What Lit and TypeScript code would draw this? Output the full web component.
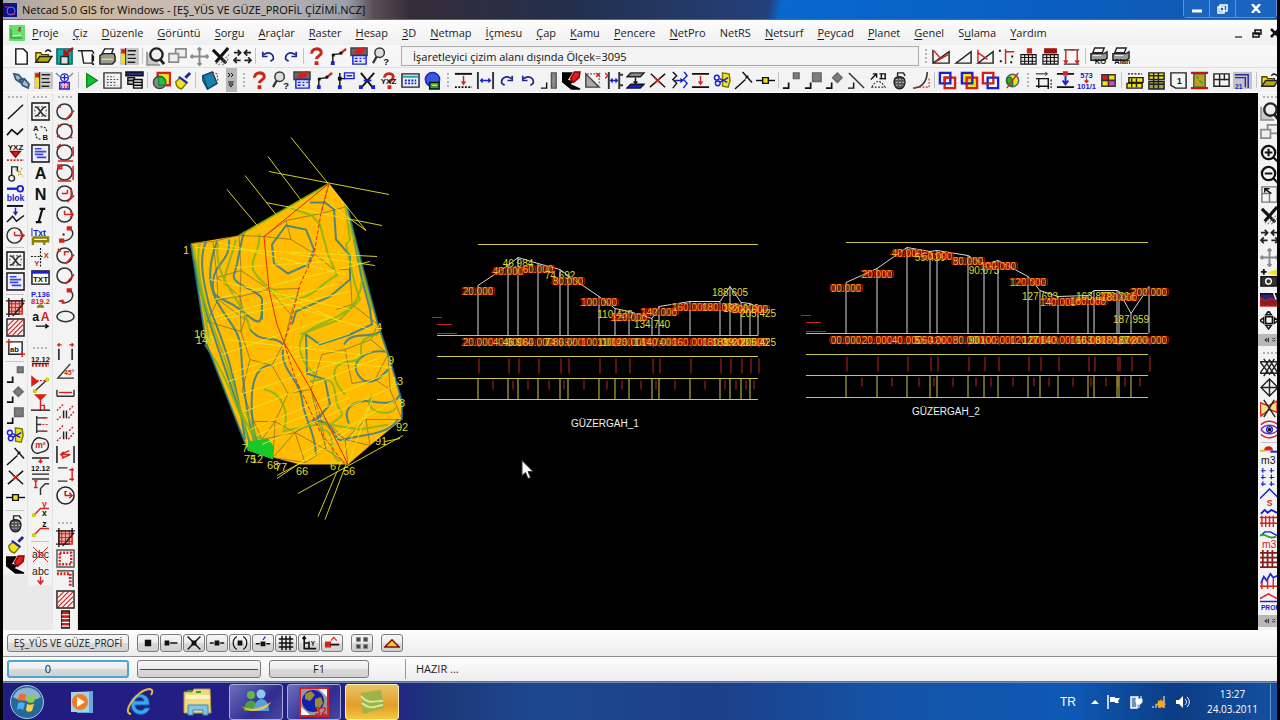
import { LitElement, html, svg, css, nothing } from "lit";
import { customElement, property } from "lit/decorators.js";

/* ---------- drawing helpers ---------- */
const P = (d: string, stroke = "#111", fill = "none", w = 1.5) =>
  svg`<path d=${d} stroke=${stroke} fill=${fill} stroke-width=${w}></path>`;
const D = (d: string, stroke = "#111", w = 1.2) =>
  svg`<path d=${d} stroke=${stroke} fill="none" stroke-width=${w} stroke-dasharray="2 1.5"></path>`;
const T = (t: string, x: number, y: number, size: number, color = "#111") =>
  svg`<text x=${x} y=${y} font-size=${size} fill=${color} text-anchor="middle" font-weight="700">${t}</text>`;
const C = (x: number, y: number, r: number, stroke = "#111", fill = "none", w = 1.5) =>
  svg`<circle cx=${x} cy=${y} r=${r} stroke=${stroke} fill=${fill} stroke-width=${w}></circle>`;

const RED = "#d8201c";
const BLUE = "#1a22d0";
const YEL = "#f2e21a";
const GRAY = "#8a8a8a";

const hatch = P("M2 8l6-6M2 13l11-11M2 18l16-16M7 18l11-11M12 18l6-6", RED, "none", 1.2);
const crossedBox = [P("M1 1h18v18h-18z", "#111", "#f4f4f4"), P("M4 5l3 1 6 8 3 1M16 5l-3 1-6 8-3 1", "#333", "none", 1.8), D("M7 5h6M7 15h6M4 8v4M16 8v4", "#555")];
const textBox = [P("M1 1h18v18h-18z", "#111", "#eef"), P("M4 5h7M4 8h12M4 11h9M6 14h10", "#3848d8", "none", 1.8)];
const help = [P("M5 7c-1-6 10-7 10-1 0 4-5 3-5 7", "#c8281c", "none", 3.2), P("M8 15h4v4h-4z", "#c8281c", "#c8281c", 0)];
const nodeLine = [P("M4 17v-9l9-1", "#111"), P("M12 7l6-5", RED, "none", 2.5), P("M2 15h4v4h-4z", BLUE, BLUE, 0), P("M3 7h3v3h-3zM11 5h3v3h-3z", "#111", "#111", 0)];
const calcBox = [P("M1 1h17v8h-17z", "#444", "#666"), P("M5 6l4-4 6-1-2 5-4 1z", RED, RED), P("M3 9h14v9h-14z", BLUE, "#dfe6ff"), P("M5 12h3M10 12h2M14 12h2M5 15h3M10 15h2", BLUE)];
const lensQ = [C(8, 6, 5, "#333", "#ddd"), P("M5 10l-4 7", "#333", "none", 2.5), T("?", 15, 19, 10)];
const undo = P("M5 8c5-4 11-1 10 5l-3 2M4 5v5h5", "#20288c", "none", 1.8);
const redo = P("M15 8c-5-4-11-1-10 5l3 2M16 5v5h-5", "#20288c", "none", 1.8);
const list = [P("M1 2h18v16h-18z", "#bbb", "#cfcfcf"), P("M8 4h9M8 8h8M8 12h9M8 16h8", "#222"), P("M2 3h3v3h-3z", RED, RED), P("M2 8h3v3h-3zM2 13h3v3h-3z", YEL, YEL), P("M6 1v18", "#111", "none", 1)];
const grayBox = (s: number) => [P(`M${18 - s} 2h${s}v${s}h-${s}z`, "#666", "#7c7c7c"), P("M7 12v6h-6", "#111", "none", 1.8)];
const diamond = [P("M13 2l5 5-5 5-5-5z", "#666", "#7c7c7c"), P("M7 12v6h-6", "#111", "none", 1.8)];
const scissors = [P("M10 2l7 1 1 7-2 7-6-1z", "#777700", YEL), C(4, 7, 2.5, BLUE), C(5, 13, 2.5, BLUE), P("M7 8l8 4M7 12l9-5", BLUE)];
const trim = [P("M1 19l11-10M9 1l10 11", "#111"), P("M12 8l3-3", "#111")];
const cross = [P("M2 17L18 3M3 3l15 14", "#111"), P("M7 7l6 6M13 7l-6 6", RED)];
const midNode = [P("M0 10h20", "#111"), P("M7 7h6v6h-6z", "#111", YEL)];
const grenade = [P("M10 6c5 0 7 4 5 9-2 5-8 5-10 0-2-5 0-9 5-9z", "#222", "#555"), P("M8 6V2h6l2 3", "#222"), D("M6 9h8M6 12h9M6 15h8", "#bbb")];
const broom = [P("M18 2l-5 5", "#20288c", "none", 3), P("M3 11l5-4 7 5-6 7c-4-1-6-4-6-8z", "#777700", YEL), P("M6 6l9 7", BLUE, "none", 2)];
const pencil = [P("M0 2h10l-5 8 6 1-3 3 11 5-9 0-10-8z", "#000", "#000"), P("M9 8l4-7h6l-1 6-6 5z", "#900", RED)];
const zoomWin = [P("M1 5v14h14", GRAY, "#c8c8c8"), C(11, 8, 6.5, "#222", "#eee", 2.5), P("M15 13l4 5", "#222", "none", 3)];
const copies = [P("M8 2h11v9h-11z", GRAY, "#eee", 1.8), P("M1 7h10v9h-10z", GRAY, "#eee", 1.8)];
const move = P("M10 1v18M1 10h18M8 3l2-2 2 2M8 17l2 2 2-2M3 8l-2 2 2 2M17 8l2 2-2 2", GRAY, "none", 2);
const wipe = [P("M2 3l14 14M18 1l-13 15", "#111", "none", 3.2), D("M8 19l11-11M12 19l7-7M5 18l4-4", "#777")];
const swap = [P("M1 6h6M5 3l3 3-3 3M12 6h7M15 3l-3 3 3 3", "#222", "none", 1.8), P("M1 14h7M4 11l-3 3 3 3M12 14h7M16 11l3 3-3 3", "#222", "none", 1.8)];
const hatchGrid = [P("M3 3h14v14h-14z", RED, "#f6b0a8"), P("M3 6h14M3 10h14M3 14h14M6 3v14M10 3v14M14 3v14", RED, "none", 1.2), P("M0 3h20M3 0v20M19 5L7 19M0 17h14M17 0v8", "#222", "none", 1.5)];
const squares = (a: string, b: string, f: string) => [P("M7 7h11v11h-11z", b, f, 2.5), P("M2 2h11v11h-11z", a, f, 2.5), P("M7 13v-6h6", b, "none", 2.5)];
const spacing = [P("M1 3h18", "#111", "none", 2), D("M1 17h18", "#111", 2), P("M10 5v9M8 11l2 3 2-3", RED)];
const gapH = [P("M2 1v18M18 1v18", "#333", "none", 2), P("M5 10h10M7 8l-2 2 2 2M13 8l2 2-2 2", BLUE)];
const table = [P("M2 8h16v10h-16zM2 11h16M2 15h16M6 8v10M10 8v10M14 8v10", "#111", "#eee", 1.2)];
const circleTan = (extra: string) => [C(9, 10, 8, "#333", "none", 1.6), P(extra, RED, "none", 1.6)];
const printer = (t: string) => [P("M6 1h10l-2 5h-10z", "#222", "#fff"), P("M2 7h14l3-2v7l-3 2h-14z", "#222", "#999"), P("M4 9h9", "#eee", "none", 1), T(t, 12, 18, 8)];
const vArrow = [P("M1 3h18M1 17h18", "#111", "none", 2), P("M10 5v9M7 10l3 4 3-4", BLUE, "none", 2), P("M8 1h4v3h-4z", RED, RED)];

const ICONS: Record<string, unknown> = {
  new: P("M4 2h8l4 4v12h-12z", "#111", "#fff"),
  open: [P("M2 16V6h5l1 2h7v3", "#554400", YEL), P("M2 16l4-6h13l-4 6z", "#222", "#b5a818"), P("M12 5c2-3 4-2 6 0", "#111")],
  save: [P("M2 2h16v16h-16z", "#066", "#16a8a8"), P("M6 10h8v8h-8z", "#033", "#ddd"), P("M19 1l-8 6M10 3v5h5", "#b01010", "none", 2.5)],
  plot: [P("M1 4h15l2 3M5 4l2 13h9V7", "#222", "#fff"), P("M17 9v6M17 17v2", "#111", "none", 2)],
  print: [P("M7 2h9l-2 6h-10z", "#222", "#fff"), P("M2 9l3-2h12l1 3v5l-3 3h-13z", "#222", "#999"), P("M4 13h12", YEL)],
  list, zoomWin, copies, move, wipe, swap, undo, redo, help, nodeLine, calcBox, lensQ,
  tri1: [P("M1 3v14h17V5L1 17", "#222"), P("M2 4l7 8M3 16l14-8", RED)],
  tri2: P("M2 17h16V5z", "#222"),
  tri3: [P("M2 17h16V5z", "#222"), P("M2 3v13M2 6l10 7", RED)],
  points: [P("M9 2v16M9 5h9", RED), P("M2 3h2v2h-2zM15 9h2v2h-2zM3 14h2v2h-2zM14 15h2v2h-2z", "#111", "#111", 0)],
  tab1: [table, P("M9 2h4v4h-4z", RED, RED)],
  tab2: [table, P("M4 2h12v4h-12z", "#9c1010", "#9c1010")],
  frame: [P("M2 3h16M2 18h16", "#333"), P("M4 3v13M16 3v13M2 14l2 3 2-3M14 14l2 3 2-3M8 3h5", RED)],
  printKo: printer("KO"), printAlan: printer("Alan"),
  link: [P("M2 3l5 1 5 6-2 3-6-4zM8 9l5-1 5 6-1 4-6-3z", "#335577", "#a8bccc", 1.8)],
  person: [C(10, 7, 4, BLUE, "#fff"), P("M10 4v6M7 7h6", BLUE), P("M5 12h10v7h-10z", BLUE, "#f0c0e8"), D("M7 12v7M10 12v7M13 12v7", RED), P("M1 2l4 4M19 2l-4 4", GRAY)],
  play: P("M5 3v14l11-7z", "#0a8a20", "#12c030"),
  sheet: [P("M1 2h18v16h-18z", "#333", "#f2f2f2"), D("M4 6h8M4 9h12M4 12h9M4 15h11", "#555")],
  windows: [P("M1 1h18v4h-18z", "#111", "#222a88"), P("M3 7h7v7h-7zM3 10h7", "#111", "#bbb"), P("M9 9h9v9h-9zM9 12h9M9 15h9", "#111", "#ddd")],
  shapes: [P("M6 2h13v13h-13z", RED, YEL, 2.5), C(8, 12, 6.5, "#444", "#888"), P("M7 6c6 0 8 4 7 9H7z", "#1a8a2a", "#22c040")],
  broom,
  book: [P("M3 5l10-4 5 12-10 6z", "#0b4668", "#1a80b0"), P("M3 5v5l5 9", "#0b4668"), D("M13 1l5 2 1 8", RED)],
  flag: [P("M4 17v-15M4 8h6", "#111"), P("M2 15h4v4h-4z", BLUE, BLUE, 0), P("M2 6h4v4h-4z", "#111", "#111", 0), P("M9 2h10v6h-10z", BLUE, "#eef"), P("M11 5h6", BLUE)],
  knot: [P("M3 2l13 16M17 2L3 18", "#111", "none", 2), P("M6 10h8", BLUE, "none", 2), P("M14 15h4v4h-4zM1 15h4v4h-4z", BLUE, BLUE, 0)],
  yxz: [P("M6 7c-1-5 9-6 9-1 0 4-4 3-4 7", "#c8281c", "none", 3), P("M9 15h4v4h-4z", "#c8281c", "#c8281c", 0), T("YXZ", 10, 14, 8.5)],
  keypad: [P("M1 3h18v14h-18z", "#222", "#e8eef8"), P("M2 6h16", "#20a0a0", "none", 2), D("M4 10h12M4 13h12", BLUE, 2)],
  globeCalc: [C(10, 9, 7.5, BLUE, "#3858e0"), P("M7 12h10v7h-10z", "#111", "#22a040"), P("M9 15h6", YEL)],
  spacing, gapH,
  col: [P("M12 2h5v16h-5z", "#555", GRAY), P("M7 12v6h-6", "#111")],
  pencil,
  gtri: [P("M3 3v14h14z", "#444", "#aaa"), D("M4 3h13v12", "#555"), P("M14 2l4 4M18 2l-4 4", RED)],
  gapRed: [P("M4 1v18M15 1v18M15 4h4M15 15h4", "#333", "none", 2), P("M6 10h7M8 8l-2 2 2 2M11 8l2 2-2 2", BLUE), P("M0 2l3 3-3 3", RED)],
  layers: [P("M5 2h14l-4 4h-14z", "#222", GRAY), P("M5 14h14l-4 4h-14z", "#113", BLUE), P("M10 7v6M8 11l2 2 2-2", "#111")],
  cross,
  zig: [P("M3 1l4 4-4 4 4 4-4 5", "#111"), P("M15 1l3 4-4 4 4 4-4 5M5 10h8M11 8l2 2-2 2", BLUE)],
  spacing2: [P("M1 3h18M1 17h18", "#111", "none", 2), P("M10 5v9M8 11l2 3 2-3", RED)],
  scissors, trim, midNode,
  box6: grayBox(6), box8: grayBox(9), diamond,
  lineBox: [P("M2 2l16 16", "#333"), P("M7 12v6h-6", "#111")],
  arrowEm: [P("M2 9l6-6M4 3h4v4M11 3h7M11 8h7M13 3v6M17 3v6", "#111"), D("M3 17c4-8 9-8 14 0z", "#333")],
  grenade,
  curve: [P("M1 18c8 0 15-6 15-17", "#222"), D("M4 17h14v-10", RED)],
  sqA: squares(BLUE, "#d82010", "none"), sqB: squares(BLUE, "#d82010", YEL), sqC: squares("#d82010", BLUE, "#fff"),
  globe: [C(10, 10, 6.5, "#557", YEL), P("M4 8c4-4 7 0 6 8-4 0-7-4-6-8z", "#187830", "#22b040"), P("M4 18L16 2", RED)],
  dim: [P("M2 8h13v11M5 8v10M2 16h14", "#111"), P("M2 3h12M12 1l2 2-2 2", "#111", "none", 1), D("M18 9v9", "#111")],
  vArrow,
  n573: [T("573", 10, 7, 8, BLUE), P("M10 8v4M8 10l2 2 2-2", RED), T("101/1", 10, 19, 8, BLUE)],
  quad: [P("M3 4h7v6h-7z", "#333", RED), P("M10 4h7v6h-7z", "#333", YEL), P("M3 10h7v6h-7z", "#333", YEL), P("M10 10h7v6h-7z", "#333", "#e040d0")],
  db1: [P("M3 7h15v5h-15zM1 13h16v5h-16z", "#222", YEL), D("M2 3h15", "#111"), P("M6 8v9M11 8v9", "#222")],
  db2: [P("M2 2h16v7h-16z", "#222", YEL), P("M2 11h16v8h-16z", "#222", "#a8a040"), P("M7 2v17M12 2v17M2 5h16M2 14h16", "#222")],
  page1: [P("M2 2h16v16h-11l-5-3z", "#222", "#f4f4f4"), T("1", 11, 14, 9)],
  scroll: [P("M4 3h12v14h-12z", "#553", "#b8a020"), P("M1 2h18M1 18h18", "#c01818", "none", 2.5), P("M7 6l2 2M10 10l3 3", "#22a040")],
  panes: P("M2 3h16v13h-16zM2 9h16M8 3v13M13 3v7", "#222", "#f4f4f4"),
  pipe: [P("M0 1h20v18h-20z", "#bbb", "#c4c4c8", 0), P("M2 4h14v14M2 7h11v10", "#2030a0"), T("21", 6, 19, 7, BLUE)],

  line: P("M2 18L18 3", "#111"),
  poly: P("M1 14l5-6 6 5 6-6", "#111", "none", 1.8),
  yxzDown: [T("YXZ", 10, 7, 8.5), P("M5 9h10l-5 6z", "#900", RED), D("M1 18h18", RED, 2)],
  tap: [C(6, 15, 3, "#333"), P("M6 12V3h6v5", "#222"), D("M10 5l8 8M17 4l-4 8", "#b8a800")],
  blok: [C(15, 5, 3, BLUE, "none", 2), P("M1 5h11", BLUE, "none", 2.5), T("blok", 10, 18, 9, BLUE)],
  arrPoly: [P("M1 1h17", "#111", "none", 2), P("M10 3v6M8 7l2 3 2-3", BLUE), P("M1 18l6-6 4 5 8-6", "#111")],
  circR: [C(9, 10, 8, "#333"), P("M9 10h10M15 7l4 3-4 3M9 6v4", RED)],
  crossedBox, textBox, hatchGrid,
  hatchBox: [hatch, P("M1 1h18v18h-18z", "#222")],
  abBox: [P("M3 3h14v13h-14z", "#222", "#fff"), T("ab", 9, 14, 8), P("M0 3h6M3 0v6M14 16h6M17 13v6", RED)],
  ab: [T("A", 5, 8, 8), T("B", 15, 18, 8), D("M10 4c6 0 7 3 6 6M5 11c0 5 2 6 6 6")],
  bigA: T("A", 10, 16, 17), bigN: T("N", 10, 16, 17),
  bigI: P("M9 3h6M5 17h6M12 3L8 17", "#111", "none", 2.2),
  txtT: [T("Txt", 9, 9, 9, BLUE), P("M2 11h16v4h-4v4M2 11v8M2 15h14", "#8a8200", "none", 2.5), P("M1 1v9", BLUE, "none", 1)],
  xy: [D("M10 0v20M0 9h12"), T("X", 16, 10, 8, RED), T("Y", 6, 19, 8, RED)],
  txt: [P("M1 3h18v14h-18z", "#111", "#fff"), P("M1 3h18v3h-18z", BLUE, BLUE, 0), T("TXT", 10, 15, 8.5)],
  p136: [T("P.136", 10, 8, 8, BLUE), T("819.2", 10, 16, 8, RED), P("M7 19c1-3 5-3 6 0z", "#887700", YEL)],
  aA: [T("a", 5, 12, 13), T("A", 15, 12, 13, RED), P("M5 17h13M15 15l3 2-3 2", "#111")],
  n1212: [T("12.12", 10, 9, 8), D("M1 13h18", RED, 3), P("M1 11h18", "#333")],
  redTri: [P("M1 3v9l6-4z", RED, RED), D("M6 7h10", RED), P("M4 18L17 6", "#333"), C(4, 18, 1.5, "#cc0", YEL), C(17, 6, 1.5, "#cc0", YEL)],
  redDown: [P("M5 1h10l-5 5z", RED, RED), P("M10 6v11M10 12h4v4", RED), P("M0 17h20", "#222")],
  fork: [P("M6 1v18M6 3h10M6 10h5M6 17h10", "#333"), D("M12 3h7M12 10h7M12 17h7", RED)],
  m2: [P("M5 3c4-3 5 0 9 0 4 1 5 6 4 9-1 5-6 4-10 6-5 1-8-4-7-8 1-3 1-5 4-7z", "#222"), T("m²", 10, 13, 9, RED)],
  n12r: [T("12.12", 10, 15, 8), P("M1 1h18M1 18h18", "#222"), P("M10 1v5M8 4l2 2 2-2", RED)],
  stepI: [P("M1 1h18M10 18v-7l5-5h4", "#333"), P("M5 3v7M3 3h4M3 10h4", RED)],
  yx: [T("y", 14, 8, 9, RED), T("x", 14, 18, 9), P("M4 16l6-6h9", RED), C(3, 17, 1.5, "#cc0", YEL)],
  zz: [T("z", 14, 8, 9), P("M4 16l6-6h9", RED), C(3, 17, 1.5, "#cc0", YEL)],
  abcX: [svg`<text x="10" y="14" font-size="11" fill="#222" text-anchor="middle">abc</text>`, P("M2 2l16 16M18 2L2 18", RED, "none", 1)],
  abcD: [svg`<text x="10" y="9" font-size="11" fill="#222" text-anchor="middle">abc</text>`, P("M10 11v7M7 15l3 4 3-4", RED)],
  c1: circleTan("M19 9L10 19M3 4l2 2"), c2: circleTan("M2 3l3 2M15 3l2 2M1 16l3-2M15 15l2 2"),
  c3: circleTan("M2 19h16M1 5l4-4M18 4v10"), c4: circleTan("M2 2h4v4h-4zM18 3v15M2 19h14"),
  c5: circleTan("M6 10h6M12 10v-4M16 4v12M12 19l7-7"), c6: circleTan("M9 10h9M15 7l3 3-3 3M9 6v4"),
  c7: [P("M14 3c7 5 3 14-8 14", "#333"), P("M12 2h4v3h-4zM4 15h4v3h-4z", RED, RED), P("M7 9h2v2h-2z", "#111", "#111", 0)],
  c8: circleTan("M9 10v-4h5M19 9L10 19M2 3l3 3"), c9: circleTan("M19 9L10 19"),
  c10: [P("M14 3c7 5 3 14-8 14", "#333"), P("M12 2h4v3h-4zM3 15l4-1 2 3", RED, RED)],
  ell: svg`<ellipse cx="10" cy="10" rx="9" ry="5.5" stroke="#333" fill="none" stroke-width="1.6"></ellipse>`,
  d1: [P("M3 7v12M17 7v12", "#333", "none", 1.8), P("M1 3h5M14 3h5M3 1v4M17 1v4", RED)],
  ang: [P("M19 17h-17L15 2", "#333"), T("45°", 14, 14, 7, RED)],
  d2: [P("M1 7v7M19 7v7M1 14h18", "#333"), P("M3 10h14", RED)],
  par: [P("M8 8v8M11 8v8", "#222"), D("M1 8l7-7M13 16l6-7", RED, 1.5), D("M1 18l5-5M14 7l5-5", RED, 1.5)],
  bolt: [P("M1 1v18M19 1v18", "#333", "none", 1.8), P("M14 6L5 10h10l-9 4M8 7L5 10l3 3", RED)],
  brk: [P("M2 3h10M2 17h10", "#333"), P("M17 3v14M14 5h5M14 15h5", RED)],
  circBig: [C(10, 10, 9, "#222", "none", 1.6), P("M9 10h8M14 7l3 3-3 3", RED), T("r", 10, 9, 8)],
  dotBox: [D("M4 4h12v12h-12z", RED, 2.5), P("M1 1h18v18h-18z", "#555")],
  corner: [D("M1 5h14v14", RED, 3), P("M1 2h17v17", "#333")],
  ladder: [P("M6 1h8v18h-8z", "#222", RED), P("M6 5h8M6 9h8M6 13h8M6 17h8", "#fff", "none", 1.2)],

  zin: [C(9, 9, 7, "#111", "none", 2.4), P("M5 9h8M9 5v8M14 14l5 5", "#111", "none", 2.2)],
  zout: [C(9, 9, 7, "#111", "none", 2.4), P("M5 9h8M14 14l5 5", "#111", "none", 2.2)],
  ext: [P("M2 2h16v16h-16zM2 9h8v9", "#777"), P("M5 4l7 5M5 8v-4h5", "#111")],
  cam: [P("M1 8h17v10h-17z", "#111", "#333"), C(9, 13, 3, "#fff"), P("M4 0v6M1 3h6", "#111", "none", 2), P("M10 4l8-3v5z", YEL, YEL)],
  ship: [P("M0 4h18v12h-18z", "#111", "#25257a"), P("M0 8l6 3 6-2 6 2v6h-18z", RED, "#8c1c1c", 1), P("M9 2l5 0 3 8", "#fff")],
  pan4: [P("M6 6h7v7h-7z", "#111"), P("M9 0l3 4h-6zM9 19l3-4h-6zM0 10l4-3v6zM19 10l-4-3v6z", "#111")],
  hex: P("M0 4h19L10 17zM0 16h19L10 2zM4 1l12 18M15 1L4 19", "#222"),
  dia: P("M10 1l9 9-9 9-9-9zM10 1v18M1 10h18", "#222"),
  burst: [P("M0 4l9 3 9-5v12l-8-3-9 7z", RED, "#f0e080"), P("M4 1l12 18M15 1L4 19", "#222")],
  eye: [C(10, 10, 3, BLUE, "#fff"), C(10, 10, 1, "#000", "#000"), P("M1 10c4-6 14-6 18 0M1 10c4 6 14 6 18 0", "#7030c0"), P("M1 5c5-5 13-5 18 0M1 15c5 5 13 5 18 0", RED)],
  m3a: [P("M5 4c1-4 7-4 8 0z", RED, RED), P("M0 5h6", "#f0b020", "none", 2), P("M11 6h8", BLUE, "none", 2), svg`<text x="1" y="19" font-size="11" fill="#111">m3</text>`],
  plus: P("M1 4h5M3 1v5M10 4h5M12 1v5M1 11h5M3 8v5M10 11h5M12 8v5M1 18h5M3 15v5M10 18h5M12 15v5", BLUE, "none", 1.2),
  peak: [P("M0 11L10 1l9 9", BLUE), T("S", 10, 19, 9, RED)],
  wave: [P("M1 5l4-4 3 3 4-3 6 3", BLUE, "none", 2), P("M0 9h19M0 15h19M2 7v12M6 7v12M10 7v12M14 7v12", RED)],
  m3b: [P("M1 6l4-4 6 0 7 4", BLUE), P("M0 6c6-4 8 5 17 1", "#22a040", "none", 2), svg`<text x="2" y="19" font-size="11" fill=${RED}>m3</text>`],
  grid: P("M0 3h19M0 8h19M0 13h19M3 0v19M8 0v19M13 0v19M0 18h19", "#8a1c1c", "none", 1.8),
  mtn: [P("M1 13l3-7 3 4 4-7 3 4 4-2", BLUE, "none", 1.8), P("M0 16h19M2 11v8M8 8v11M14 8v11", RED)],
  prof: [P("M0 7l9-5 9 5", RED), P("M0 10h19", BLUE), svg`<text x="1" y="19" font-size="7" font-weight="700" fill=${BLUE}>PROF</text>`],

  s1: P("M6 6h8v8h-8z", "#111", "#111", 0),
  s2: P("M2 7h6v6h-6zM9 9h9v2h-9z", "#111", "#111", 0),
  s3: [P("M2 2l16 16M18 2L2 18", "#111", "none", 1.8), P("M7 7h6v6h-6z", "#111", "#111", 0)],
  s4: P("M7 7h6v6h-6zM1 9h5v2h-5zM14 9h5v2h-5z", "#111", "#111", 0),
  s5: [P("M6 2c-6 4-6 12 0 16M14 2c6 4 6 12 0 16", "#111"), P("M7 7h6v6h-6z", "#111", "#111", 0)],
  s6: [P("M7 8h6v6h-6zM1 10h5v2h-5zM14 10h5v2h-5z", "#111", "#111", 0), P("M10 6l3-4", BLUE)],
  s7: P("M1 5h18M1 10h18M1 15h18M5 1v18M10 1v18M15 1v18", "#111", "none", 1.8),
  s8: [P("M4 2v15h15M2 5l2-3 2 3M10 17V8M4 10h6", "#111", "none", 2), T("Y", 15, 14, 8)],
  s9: [P("M2 9h6v6h-6z", RED, RED), P("M8 12h11", "#111", "none", 2), P("M9 7l3-4 4 4", RED)],
  s10: P("M3 3h5v5h-5zM12 3h5v5h-5zM3 12h5v5h-5zM12 12h5v5h-5z", "#888", "#444", 1),
  s11: P("M1 15L10 6l9 9z", "#7a1010", "#f8c81c", 2),
};

/* ---------- toolbar contents: "|" separator, ":" grip, ">" overflow chevron, "_" spacer ---------- */
const ROW1_LEFT = "new open save plot print list | zoomWin copies move wipe swap | undo redo | help nodeLine calcBox lensQ";
const ROW1_RIGHT = ": tri1 tri2 tri3 points tab1 tab2 frame | printKo printAlan";
const ROW2 =
  "link list person | play sheet windows | shapes broom | book > : help lensQ calcBox nodeLine flag knot yxz keypad globeCalc : " +
  "spacing gapH redo undo col pencil gtri gapRed layers cross zig spacing2 scissors trim midNode | box6 box8 diamond lineBox arrowEm grenade curve | " +
  "sqA sqB sqC globe : dim vArrow n573 quad | db1 db2 page1 scroll panes pipe | open";
const COL1 = ": line poly yxzDown tap blok arrPoly circR | crossedBox textBox | hatchGrid hatchBox abBox | box6 diamond box8 scissors trim cross midNode | grenade broom pencil";
const COL2 = ": crossedBox ab textBox bigA bigN bigI txtT xy txt p136 aA _ : n1212 redTri redDown fork m2 n12r stepI yx zz | abcX abcD";
const COL3 = ": c1 c2 c3 c4 c5 c6 c7 c8 c9 c10 ell _ d1 ang d2 par par bolt brk circBig _ : hatchGrid dotBox corner hatchBox ladder";
const COL4 = ": zoomWin copies zin zout ext wipe swap move cam ship pan4 > : hex dia burst eye | m3a plus peak wave m3b grid mtn prof >";

@customElement("nc-icon")
class NcIcon extends LitElement {
  @property() name = "";
  static styles = css`
    :host { display: block; width: 20px; height: 20px; flex: none; }
    svg { display: block; width: 100%; height: 100%; font-family: "Liberation Sans", sans-serif; }
  `;
  render() {
    return html`<svg viewBox="0 0 20 20" aria-hidden="true">${ICONS[this.name] ?? nothing}</svg>`;
  }
}

@customElement("nc-toolbar")
class NcToolbar extends LitElement {
  @property() items = "";
  @property({ reflect: true }) flow = "row";
  static styles = css`
    :host { display: flex; align-items: stretch; overflow: hidden; }
    :host([flow="column"]) { flex-direction: column; }
    button { flex: 1 1 0; min-width: 0; min-height: 0; padding: 0; border: 0; background: none; display: flex; align-items: center; justify-content: center; }
    nc-icon { width: 19px; height: 19px; }
    .sep { flex: 0 0 5px; display: flex; justify-content: center; align-items: center; }
    .sep::before { content: ""; width: 1px; height: 16px; background: #c4c4c4; }
    :host([flow="column"]) .sep::before { width: 18px; height: 1px; }
    .grip { flex: 0 0 10px; display: flex; align-items: center; justify-content: center; }
    .grip::before { content: ""; height: 14px; border-left: 2px dotted #b4b4b4; }
    :host([flow="column"]) .grip { flex-basis: 8px; }
    :host([flow="column"]) .grip::before { height: 0; width: 14px; border-left: 0; border-top: 2px dotted #b4b4b4; }
    .more { flex: 0 0 11px; margin: 0 2px 0 6px; background: #b8b8b8; flex-direction: column; }
    .more svg { width: 8px; height: 16px; }
    :host([flow="column"]) .more { margin: 3px 0; flex-basis: 12px; }
    :host([flow="column"]) .more svg { transform: rotate(90deg); }
    .space { flex: 0 0 14px; }
  `;
  render() {
    return this.items.split(" ").map((n) =>
      n === "|" ? html`<span class="sep"></span>`
      : n === ":" ? html`<span class="grip"></span>`
      : n === "_" ? html`<span class="space"></span>`
      : n === ">" ? html`<button class="more" aria-label="more"><svg viewBox="0 0 8 16"><path d="M1 1l2 2-2 2M4 1l2 2-2 2M1 10h6M2 12h4l-2 3z" stroke="#111" fill="none"></path></svg></button>`
      : html`<button aria-label=${n}><nc-icon name=${n}></nc-icon></button>`);
  }
}

/* ---------- drawing data ---------- */
type Station = { x: number; y: number; label: string; whole: boolean };
const st = (x: number, y: number, label: string): Station => ({ x, y, label, whole: label.endsWith(".000") });

const PROFILE_1 = {
  name: "GÜZERGAH_1", nameX: 605, nameY: 427, left: 437, right: 758, top: 245, rows: [336, 357, 379, 400],
  stations: [
    st(478, 286, "20.000"), st(508, 266, "40.000"), st(518, 258, "46.984"), st(538, 264, "60.000"), st(560, 270, "74.692"),
    st(568, 276, "80.000"), st(599, 297, "100.000"), st(615, 309, "110.430"), st(629, 312, "120.000"), st(652, 319, "134.740"),
    st(659, 307, "140.000"), st(690, 302, "160.000"), st(720, 302, "180.000"), st(730, 287, "188.605"), st(741, 303, "193.800"),
    st(750, 304, "200.000"), st(758, 308, "205.425"),
  ],
};
const PROFILE_2 = {
  name: "GÜZERGAH_2", nameX: 946, nameY: 415, left: 806, right: 1148, top: 243, rows: [334, 355, 376, 398],
  stations: [
    st(846, 283, "00.000"), st(877, 269, "20.000"), st(907, 248, "40.000"), st(930, 252, "55.426"), st(937, 251, "60.000"),
    st(968, 256, "80.000"), st(984, 265, "90.673"), st(998, 261, "100.000"), st(1028, 277, "120.000"), st(1040, 291, "127.693"),
    st(1058, 297, "140.000"), st(1088, 296, "160.000"), st(1094, 291, "163.872"), st(1117, 291, "179.296"), st(1119, 292, "180.000"),
    st(1131, 314, "187.959"), st(1149, 287, "200.000"),
  ],
};

const OUTLINE = "M191 244L239 236L329 184L347 207L358 250L378 325L390 360L402 402V420L370 446L348 465H300L273 458L248 451L230 405L206 343Z";
const NODES: [number, number][] = [
  [191, 244], [213, 242], [239, 236], [264, 237], [286, 221], [329, 184], [321, 214], [347, 207], [291, 240], [314, 254], [334, 270],
  [241, 271], [217, 278], [218, 300], [240, 297], [269, 290], [299, 289], [350, 270], [352, 305], [336, 310], [291, 315], [245, 320],
  [207, 322], [241, 332], [284, 343], [322, 355], [345, 350], [378, 325], [371, 340], [388, 355], [250, 360], [272, 366], [242, 391],
  [288, 394], [311, 390], [320, 415], [352, 384], [375, 380], [390, 390], [402, 420], [366, 420], [345, 440], [318, 420], [295, 433],
  [275, 422], [254, 422], [262, 440], [273, 458], [305, 463], [326, 450], [348, 465], [370, 446],
];
const MESH = NODES.flatMap(([x, y], i) =>
  NODES.slice(i + 1).filter(([a, b]) => Math.hypot(a - x, b - y) < 37).map(([a, b]) => `M${x} ${y}L${a} ${b}`)).join("");

const CONTOURS_BLUE = [
  "M206 242C198 260 204 285 209 305S232 350 245 440", "M217 242C210 260 206 280 216 300S240 330 241 350S244 410 256 448",
  "M229 240C231 262 215 262 213 282S222 296 240 310S262 330 262 305", "M244 232C238 255 238 265 234 275S262 292 262 300V320",
  "M286 226L306 230L314 250L308 265L288 274L274 264L272 245Z", "M310 203L325 203L334 210L336 240L350 256V280L330 297L296 312L292 325",
  "M195 260C198 300 220 350 252 450", "M354 240L362 280L370 310L372 325L350 335L320 345L306 335L307 374L325 380L330 405L315 422",
  "M283 350C280 370 300 380 302 400S315 430 316 455", "M272 366C250 365 250 400 253 425S262 444 266 455",
  "M385 352C365 350 350 362 358 375S378 382 388 370", "M349 424C340 405 360 400 372 402S395 405 400 395",
  "M312 421C340 420 330 445 345 440S388 436 398 420", "M250 330C262 345 275 335 283 345", "M344 345C352 330 372 340 380 332",
];
const CONTOURS_GREEN = [
  "M200 243C194 270 206 310 214 330S235 385 248 440", "M259 234C262 250 248 262 254 272S280 300 297 299S325 280 337 276L328 255L320 225L312 216L290 208",
  "M236 240C230 262 226 270 224 282", "M345 205L350 240L346 245L355 285L360 300L340 320L300 335", "M362 280C360 320 320 320 306 333S305 370 317 375",
  "M264 390C280 392 290 410 284 430", "M310 382C345 372 330 400 340 410S318 425 332 430", "M378 335C345 340 375 360 350 362S335 385 345 395",
  "M240 410L262 455M246 412L258 440", "M320 430C340 430 325 455 340 462", "M205 345C240 395 232 420 262 440", "M372 396C360 410 388 420 396 408",
  "M282 432L322 424L360 430L388 425", "M218 243C212 280 244 300 250 330",
];
const SECTIONS = "M291 138L366 231M268 157L302 202M245 176L276 215M227 190L258 227M269 172L389 195M266 203L382 226M195 248L377 257M290 254L375 266" +
  "M403 436L298 494M400 439L385 442M277 476L345 440M277 479L350 430M337 472L318 517M346 465L325 520M215 300L370 262M210 280L350 310M232 373L350 334M222 355L330 318" +
  "M240 395L372 352M245 412L380 358M250 430L388 374M262 445L392 388M220 320L350 292M218 243L345 275M300 455L396 400M270 300L370 330M225 340L360 355M214 318L335 285M330 205L366 231M348 465L372 400M340 460L368 408" +
  "M268 289L340 322M236 268L330 262M228 382L300 356M300 360L392 368M256 436L350 398";
const TAGS: [string, number, number][] = [
  ["1", 186, 254], ["16", 200, 338], ["140", 205, 344], ["4", 379, 331], ["9", 391, 364], ["13", 397, 385], ["8", 402, 407], ["92", 402, 431],
  ["91", 381, 445], ["66", 302, 475], ["56", 349, 475], ["67", 336, 470], ["7", 245, 452], ["75", 250, 463], ["12", 257, 463], ["68", 273, 469], ["77", 281, 471],
];

const label = (s: Station, y: number) => s.whole
  ? svg`<text class="red" x=${s.x - 2} y=${y}>${s.label}</text><text class="red" x=${s.x + 2} y=${y}>${s.label}</text><text class="amber" x=${s.x} y=${y}>${s.label}</text>`
  : svg`<text class="lime" x=${s.x} y=${y}>${s.label}</text>`;

const profile = (p: typeof PROFILE_1) => {
  const [r1, r2, r3, r4] = p.rows;
  const s = p.stations;
  return svg`
    <path class="rule" d=${`M${s[0].x} ${p.top}H${p.right}` + p.rows.map((r) => `M${p.left} ${r}H${p.right}`).join("")}></path>
    <path class="ground" d=${"M" + s.map((q) => `${q.x} ${q.y}`).join("L")}></path>
    <path class="drop" d=${s.map((q) => `M${q.x} ${q.y}V${r1}`).join("")}></path>
    <path class="tick" d=${s.map((q) => `M${q.x + 1} ${r1 + 4}v8M${q.x + 1} ${r2 + 2}v15`).join("")
      + s.slice(1).map((q, i) => `M${Math.round((q.x + s[i].x) / 2)} ${r3 + 2}v9`).join("")}></path>
    <path class="cell" d=${s.slice(0, -1).map((q) => `M${q.x} ${r3}V${r4}`).join("")}></path>
    <path class="tick" d=${`M${p.left - 5} ${r1 - 18}h10M${p.left} ${r1 - 11}h15M${p.left} ${r1 - 2}h20`}></path>
    ${s.map((q) => label(q, q.y + 9))}
    ${s.map((q) => label(q, r1 + 10))}
    <text class="title" x=${p.nameX} y=${p.nameY}>${p.name}</text>`;
};

@customElement("nc-canvas")
class NcCanvas extends LitElement {
  static styles = css`
    :host { display: block; background: #000; overflow: hidden; }
    svg { display: block; width: 100%; height: 100%; font: 10px "Liberation Sans", sans-serif; }
    path { fill: none; stroke-width: 1; }
    text { text-anchor: middle; }
    .rule, .cell { stroke: #d0c848; }
    .ground, .drop { stroke: #d8d8d8; }
    .tick { stroke: #c0241a; }
    .red { fill: #c01c0a; }
    .amber { fill: #f8ac28; }
    .lime, .tag { fill: #dcdc30; }
    .tag { font-size: 11px; }
    .title { fill: #f0f0f0; }
    .land { fill: #ffbc00; }
    .mesh { stroke: #86703c; opacity: 0.8; }
    .blue { stroke: #28789a; }
    .green { stroke: #7cb41c; }
    .wide { stroke-width: 2; opacity: 0.8; }
    .patch { fill: #18c828; }
    .section { stroke: #ece424; opacity: 0.9; }
    .route { stroke: #e02814; }
    .dash { stroke-dasharray: 4 2; }
    .pointer { fill: #fff; stroke: #333; }
  `;
  render() {
    return html`<svg viewBox="78 94 1180 536" preserveAspectRatio="xMidYMid meet" role="img" aria-label="Plan and profiles">
      <path class="land" d=${OUTLINE}></path>
      <path class="mesh" d=${MESH}></path>
      <path class="blue wide" d=${CONTOURS_BLUE.join("")}></path>
      <path class="green wide" d=${CONTOURS_GREEN.join("")}></path>
      <path class="blue wide" d="M191 244L206 343L248 451M347 207L358 250L378 325L390 360L402 402V420"></path>
      <path class="green wide" d="M239 236L329 184M193 246L210 345M350 225L372 310"></path>
      <path class="patch" d="M248 442L268 439L273 446V460L248 451Z"></path>
      <path class="section" d=${SECTIONS}></path>
      <path class="route" d="M329 184L264 237L269 290L277 325L284 343L311 390L348 465"></path>
      <path class="route dash" d="M329 184L321 214L314 255L300 285L290 325L284 343L295 378L305 400L320 432L344 464"></path>
      ${TAGS.map(([t, x, y]) => svg`<text class="tag" x=${x} y=${y}>${t}</text>`)}
      ${profile(PROFILE_1)}${profile(PROFILE_2)}
      <path class="pointer" d="M522 461v15l3.500-3 2.500 6 2.500-1-2.500-6h5z"></path>
    </svg>`;
  }
}

const MENU = ["_Proje", "_Çiz", "_Düzenle", "_Görüntü", "_Sorgu", "_Araçlar", "_Raster", "_Hesap", "_3D", "_Netmap", "_İçmesu", "_Çap", "_Kamu",
  "_Pencere", "_NetPro", "NetRS", "_Netsurf", "_Peycad", "_Planet", "_Genel", "S_ulama", "_Yardım"];
const menuText = (m: string) => {
  const i = m.indexOf("_");
  return i < 0 ? m : html`${m.slice(0, i)}<u>${m[i + 1]}</u>${m.slice(i + 2)}`;
};

@customElement("app-root")
class AppRoot extends LitElement {
  static styles = css`
    :host { display: flex; flex-direction: column; height: 100vh; box-sizing: border-box; overflow: hidden; padding: 0 3px; background: #000; color: #1c1c1c; font: 11px/16px "Open Sans", "Noto Sans", sans-serif; }
    button { font: inherit; color: inherit; padding: 0; }
    svg { display: block; }

    .titlebar { flex: none; height: 20px; display: flex; align-items: center; gap: 5px; background: linear-gradient(102deg, transparent 60%, #0868cc 61%, #0a5fc4 80%, #1158a8 100%), linear-gradient(90deg, #a4a4a8 0, #cdb69c 6%, #c8bcb4 14%, #b4b0b2 22%, #9ca0aa 27%, #5c5058 29%, #352c38 32%, #22304e 45%, #24407a 60%); border-bottom: 1px solid #63666c; box-sizing: border-box; }
    .appicon { width: 14px; height: 14px; }
    h1 { margin: 0; flex: 1; font-size: 11px; font-weight: 400; white-space: nowrap; color: #080808; }
    .winbtns { display: flex; height: 17px; align-self: flex-start; border: 1px solid #5c94d8; border-top: 0; border-radius: 0 0 4px 4px; }
    .winbtns button { width: 26px; border: 0; border-right: 1px solid #5c94d8; background: #1a64c0; display: flex; align-items: center; justify-content: center; }
    .winbtns .close { width: 40px; border-right: 0; }

    .menubar { flex: none; height: 25px; display: flex; align-items: center; overflow: hidden; background: linear-gradient(#fdfdfd, #efefef); }
    .menubar nav { flex: 1; display: flex; gap: 14px; }
    .menubar nav button { border: 0; background: none; white-space: nowrap; }
    u { text-underline-offset: 2px; }
    .docicon { margin: 0 7px 0 6px; width: 16px; height: 16px; }
    .mdi { display: flex; gap: 6px; margin-right: -5px; }
    .mdi button { width: 12px; height: 16px; border: 0; background: none; }

    .tools { flex: none; overflow: hidden; background: linear-gradient(#f8f8f8, #f1f1f1); border-bottom: 1px solid #fff; }
    .row1 { display: flex; height: 22px; align-items: stretch; border-bottom: 1px solid #e0e0e0; }
    .left { flex: 0 0 381px; margin-left: 8px; }
    .message { flex: 1; min-width: 0; margin: 0 2px 0 9px; height: 20px; align-self: center; box-sizing: border-box; border: 1px solid #a8a8a8; background: #f3f3f3; padding: 0 11px; font: inherit; color: #111; }
    .right { flex: 0 0 210px; margin-right: 146px; }
    .row2 { height: 24px; margin-left: 8px; margin-right: -3px; }

    .work { flex: 1; min-height: 0; display: flex; overflow: hidden; background: #e9e9e9; }
    .rail { flex: 0 0 25px; align-self: stretch; background: #f3f3f3; box-sizing: border-box; border-right: 1px solid #e4e4e4; }
    .one { margin-bottom: 55px; }
    .two { margin-bottom: 44px; }
    .end { flex: 0 0 24px; margin-right: -5px; }
    nc-canvas { flex: 1; min-width: 0; }

    .status { flex: none; background: linear-gradient(#fdfdfd, #ededed); height: 26px; display: flex; align-items: center; padding-left: 4px; box-sizing: border-box; }
    .status + .status { border-top: 1px solid #909090; border-bottom: 1px solid #707070; }
    .status button { height: 18px; box-sizing: border-box; border: 1px solid #7c7c7c; border-radius: 3px; background: linear-gradient(#f6f6f6, #ececec 50%, #dadada 51%, #d0d0d0); display: flex; align-items: center; justify-content: center; white-space: nowrap; overflow: hidden; }
    .status .layer { width: 122px; margin-right: 8px; font-size: 10px; }
    .status .active { border: 2px solid #48a8d0; padding-right: 40px; font-size: 11px; }
    .status .pen { width: 124px; margin-right: 8px; }
    .pen::before { content: ""; width: 118px; height: 1px; background: #3840b0; }
    .status .fkey { width: 100px; }
    .toggles { display: flex; gap: 1px; }
    .toggles button { width: 22px; }
    .toggles nc-icon { width: 16px; height: 16px; }
    .toggles .apart { margin-left: 7px; }
    .ready { margin-left: 36px; border-left: 1px solid #999; padding-left: 10px; line-height: 20px; }

    .taskbar { flex: none; height: 38px; display: flex; align-items: center; gap: 4px; box-sizing: border-box; border-top: 1px solid #7088b8; color: #fff; background: linear-gradient(90deg, #221c80 0, #231f88 30%, #1c3878 34%, #1c4890 42%, #1c4088 56%, #1454a8 70%, #0e58b4 84%, #0c3c84 92%, #1450a0 100%); }
    .taskbar button { width: 54px; height: 36px; border: 1px solid transparent; border-radius: 3px; background: none; display: flex; align-items: center; justify-content: center; box-sizing: border-box; }
    .taskbar .orb { width: 48px; }
    .taskbar .open { background: linear-gradient(135deg, #6c70bc, #302c90 60%, #4848a0); border-color: #a8acd8; }
    .taskbar .hot { background: linear-gradient(#e8c468, #e49c28 60%, #f4c840); border-color: #fff0b0; }
    .tray { margin-left: auto; display: flex; align-items: center; gap: 8px; padding-right: 8px; }
    .lang { margin-right: 7px; font: 12px "Liberation Sans", sans-serif; }
    .clock { text-align: center; font-size: 10px; line-height: 15px; margin-left: 8px; }
    .peek { width: 7px; height: 36px; border-left: 1px solid #6890c8; box-sizing: border-box; }
  `;
  render() {
    return html`
      <header class="titlebar">
        <svg class="appicon" viewBox="0 0 14 14" aria-hidden="true"><rect width="14" height="14" fill="#10108c"></rect><circle cx="8" cy="8" r="4" fill="none" stroke="#5878f0"></circle><path d="M2 4h4M7 11h5" stroke="#e03020"></path></svg>
        <h1>Netcad 5.0 GIS for Windows - [EŞ_YÜS VE GÜZE_PROFİL ÇİZİMİ.NCZ]</h1>
        <div class="winbtns">
          <button aria-label="Minimize"><svg width="10" height="10" viewBox="0 0 10 10"><path d="M0 7h10" stroke="#fff" stroke-width="3"></path></svg></button>
          <button aria-label="Restore"><svg width="11" height="10" viewBox="0 0 11 10"><path d="M3 1h7v6h-7zM1 3h6v6h-6z" stroke="#fff" fill="none" stroke-width="1.5"></path></svg></button>
          <button class="close" aria-label="Close"><svg width="10" height="9" viewBox="0 0 10 9"><path d="M1 0l8 9M9 0l-8 9" stroke="#fff" stroke-width="2.5"></path></svg></button>
        </div>
      </header>
      <div class="menubar">
        <svg class="docicon" viewBox="0 0 16 16" aria-hidden="true"><rect width="16" height="16" fill="#66e070"></rect><path d="M2 4v9h11" fill="none" stroke="#188830"></path><path d="M9 6l2-4v5" stroke="#a02010" fill="none"></path><path d="M4 11l8-1" stroke="#fff"></path></svg>
        <nav>${MENU.map((m) => html`<button>${menuText(m)}</button>`)}</nav>
        <div class="mdi">
          <button aria-label="Minimize document"><svg width="10" height="12"><path d="M1 10h7" stroke="#444" stroke-width="1.5"></path></svg></button>
          <button aria-label="Restore document"><svg width="10" height="12"><path d="M3 3h6v4h-6zM1 6h6v4h-6z" stroke="#111" fill="#eee" stroke-width="1.5"></path></svg></button>
          <button aria-label="Close document"><svg width="10" height="12"><path d="M1 2l8 8M9 2l-8 8" stroke="#111" stroke-width="2.5"></path></svg></button>
        </div>
      </div>
      <div class="tools">
        <div class="row1">
          <nc-toolbar class="left" items=${ROW1_LEFT}></nc-toolbar>
          <input class="message" readonly aria-label="Mesaj" value="İşaretleyici çizim alanı dışında Ölçek=3095">
          <nc-toolbar class="right" items=${ROW1_RIGHT}></nc-toolbar>
        </div>
        <nc-toolbar class="row2" items=${ROW2}></nc-toolbar>
      </div>
      <main class="work">
        <nc-toolbar class="rail one" flow="column" items=${COL1}></nc-toolbar>
        <nc-toolbar class="rail two" flow="column" items=${COL2}></nc-toolbar>
        <nc-toolbar class="rail" flow="column" items=${COL3}></nc-toolbar>
        <nc-canvas></nc-canvas>
        <nc-toolbar class="rail end" flow="column" items=${COL4}></nc-toolbar>
      </main>
      <div class="status">
        <button class="layer">EŞ_YÜS VE GÜZE_PROFİ</button>
        <div class="toggles">
          ${[1, 2, 3, 4, 5, 6, 7, 8, 9].map((i) => html`<button aria-label=${"Yakala " + i}><nc-icon name=${"s" + i}></nc-icon></button>`)}
          <button class="apart" aria-label="Izgara"><nc-icon name="s10"></nc-icon></button>
          <button class="apart" aria-label="Yukarı"><nc-icon name="s11"></nc-icon></button>
        </div>
      </div>
      <div class="status">
        <button class="layer active">0</button>
        <button class="pen" aria-label="Çizgi tipi"></button>
        <button class="fkey">F1</button>
        <span class="ready">HAZIR ...</span>
      </div>
      <footer class="taskbar">
        <button class="orb" aria-label="Başlat"><svg width="36" height="36" viewBox="0 0 36 36"><circle cx="18" cy="18" r="16.5" fill="#26689c" stroke="#a8c8e0"></circle><path d="M4 13a15 15 0 0 1 28 0c-8 5-20 5-28 0z" fill="#8cb4d0"></path><path d="M10 11c3-2 5-1 7 0l-1 6c-3-1-5-1-7 0z" fill="#f06c28"></path><path d="M19 12c3 1 5 1 8-1l-2 7c-2 1-5 1-7 0z" fill="#8cd040"></path><path d="M9 19c2-1 4-1 7 0l-2 7c-2-2-4-2-6 0z" fill="#48b0f0"></path><path d="M18 20c2 1 4 1 7 0l-2 7c-3 1-5 1-6-1z" fill="#ffd034"></path></svg></button>
        <button aria-label="Media Player"><svg width="26" height="26" viewBox="0 0 26 26"><path d="M6 3l18-1v22H8z" fill="#6ca8d8"></path><path d="M2 3h18v20H2z" fill="#a8d0f0"></path><circle cx="11" cy="13" r="8" fill="#f07c1c"></circle><path d="M8 8v10l8-5z" fill="#fff"></path></svg></button>
        <button aria-label="Internet Explorer"><svg width="30" height="30" viewBox="0 0 30 30"><path d="M24 18H10c0 6 8 7 10 3h5c-4 10-19 8-19-4 0-13 20-13 18 1zM10 14h9c0-5-8-5-9 0z" fill="#38a8f0" stroke="#1464b8" fill-rule="evenodd"></path><path d="M6 27C-4 26 12 3 24 2c4 0 4 3 2 6" fill="none" stroke="#e8b838" stroke-width="2"></path></svg></button>
        <button aria-label="Explorer"><svg width="32" height="30" viewBox="0 0 32 30"><path d="M2 5h8l2-3h16l1 24H2z" fill="#f0d880" stroke="#b89840"></path><path d="M4 8h24v4H4z" fill="#fff4c0"></path><path d="M5 4h5M14 5h5" stroke="#2ca048" stroke-width="2"></path><path d="M6 28V18h20v10h-5v-5H11v5z" fill="#80c4e8" stroke="#3c88b8"></path></svg></button>
        <button class="open" aria-label="Messenger"><svg width="32" height="26" viewBox="0 0 32 26"><circle cx="11" cy="6" r="4" fill="#68b848"></circle><path d="M4 22c0-14 14-14 14 0z" fill="#4ca040"></path><circle cx="21" cy="5" r="4.5" fill="#8cc8f0"></circle><path d="M14 22c0-16 15-16 15 0z" fill="#58a0d8"></path><path d="M1 17c8 5 20 3 30-4-5 10-22 12-30 4z" fill="#f0c060"></path></svg></button>
        <button class="open" aria-label="Netcad"><svg width="30" height="30" viewBox="0 0 30 30"><path d="M1 1h28v28H1z" fill="#989898" stroke="#d02020" stroke-width="2"></path><path d="M20 2h8v8zM2 20v8h9z" fill="#fff"></path><circle cx="14" cy="14" r="11" fill="#1020b0"></circle><path d="M6 7l6-3 4 4-5 6-5-2zM16 12l6-2 2 6-5 8-3-5z" fill="#a08830"></path><text x="22" y="28" font-size="10" font-weight="700" fill="#e01818" text-anchor="middle">32</text></svg></button>
        <button class="open hot" aria-label="Camtasia"><svg width="30" height="28" viewBox="0 0 30 28"><path d="M4 5l20-3 3 18-21 6z" fill="#9cb448"></path><path d="M4 8c8 10 15 4 22 5M5 15c8 8 16 2 21 2" stroke="#d8e8a0" fill="none" stroke-width="2"></path></svg></button>
        <div class="tray">
          <span class="lang">TR</span>
          <svg width="8" height="8" viewBox="0 0 8 8" aria-hidden="true"><path d="M0 6l4-4 4 4z" fill="#fff"></path></svg>
          <svg width="14" height="14" viewBox="0 0 14 14" aria-hidden="true"><path d="M1 0v14" stroke="#fff" stroke-width="1.5"></path><path d="M3 2h5v1h5l-2 3 1 2H8V7H3z" fill="#fff"></path></svg>
          <svg width="14" height="14" viewBox="0 0 14 14" aria-hidden="true"><path d="M2 2h6v11H2z" stroke="#fff" fill="#fff6" stroke-width="1.5"></path><path d="M7 4h6v3c-1 3-5 3-6 0zM9 4V1M12 4V1M10 9v4" stroke="#fff" fill="#fff" stroke-width="1"></path></svg>
          <svg width="16" height="14" viewBox="0 0 16 14" aria-hidden="true"><path d="M1 13v-2h2v2zM4 13V9h2v4zM8 13V6h2v7zM12 13V1h2v12z" fill="#889cb8"></path><path d="M10 4l1 2 3-1-1 3 2 1-2 2 0 2-3-1-3 1 0-2-2-2 2-1 0-3 2 1z" fill="#f8a820"></path></svg>
          <svg width="16" height="14" viewBox="0 0 16 14" aria-hidden="true"><path d="M1 5h3l4-4v12L4 9H1z" fill="#fff"></path><path d="M10 4c2 2 2 4 0 6M12 2c3 3 3 7 0 10" stroke="#fff" fill="none"></path></svg>
          <div class="clock">13:27<br>24.03.2011</div>
        </div>
        <span class="peek"></span>
      </footer>`;
  }
}
